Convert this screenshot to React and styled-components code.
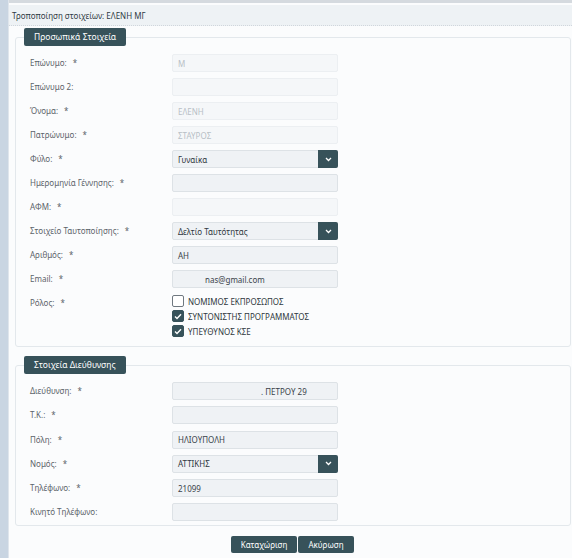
import React from "react";
import styled, { createGlobalStyle } from "styled-components";

const Global = createGlobalStyle`
  html, body { margin: 0; padding: 0; background: #fbfcfd; }
  body { font-family: "Noto Sans", "Open Sans", sans-serif; color: #555c63; }
  * { box-sizing: border-box; }
`;

const Page = styled.div`
  display: flex;
  width: 572px;
  height: 558px;
  overflow: hidden;
  background: #fbfcfd;
`;

const Stripe = styled.div`
  width: 9px;
  flex: none;
  background: #c9d5e2;
  border-right: 1px solid #dfe5ec;
`;

const Main = styled.div`
  flex: 1;
  display: flex;
  flex-direction: column;
  border-top: 3px solid #d5dadf;
`;

const Header = styled.div`
  margin-top: 2px;
  height: 21px;
  background: #eef2f5;
  border-bottom: 1px dotted #d0d6dc;
  display: flex;
  align-items: center;
  padding-left: 3px;
  font-size: 8px;
  color: #2f3a44;
`;

const Fieldset = styled.fieldset`
  margin: ${(p) => p.$top}px 1px 0 6px;
  padding: 0 0 ${(p) => p.$bottom}px 14px;
  border: 1px solid #e3e8ec;
  border-radius: 3px;
  background: #fbfcfd;
  min-width: 0;
`;

const Legend = styled.legend`
  margin-left: -6px;
  padding: 0 10px;
  height: 18px;
  line-height: 18px;
  background: #37525a;
  color: #ffffff;
  font-size: 8.5px;
  border-radius: 2px;
`;

const Rows = styled.div`
  display: flex;
  flex-direction: column;
  gap: ${(p) => p.$gap}px;
  padding-top: ${(p) => p.$pt}px;
`;

const Row = styled.div`
  display: grid;
  grid-template-columns: 142px 166px;
  align-items: start;
`;

const Label = styled.div`
  font-size: 8px;
  color: #5b636a;
  padding-top: 3px;
  white-space: nowrap;
  b {
    font-weight: normal;
    margin-left: 6px;
  }
`;

const Input = styled.div`
  height: ${(p) => p.$h || 18}px;
  border: 1px solid ${(p) => (p.$disabled ? "#eceff2" : "#dde2e6")};
  background: ${(p) => (p.$disabled ? "#f5f7f9" : "#eff2f5")};
  border-radius: 2px;
  font-size: 8px;
  color: ${(p) => (p.$disabled ? "#b8bfc6" : "#39424a")};
  display: flex;
  align-items: center;
  padding-left: ${(p) => p.$pl || 5}px;
  white-space: nowrap;
`;

const Select = styled.div`
  height: 18px;
  border: 1px solid #dde2e6;
  background: #eff2f5;
  border-radius: 2px;
  font-size: 8px;
  color: #2f3840;
  display: flex;
  align-items: center;
  justify-content: space-between;
  padding-left: 5px;
`;

const Arrow = styled.div`
  width: 20px;
  height: 18px;
  margin: -1px -1px -1px 0;
  background: #37525a;
  border-radius: 0 2px 2px 0;
  display: flex;
  align-items: center;
  justify-content: center;
`;

const Checks = styled.div`
  display: flex;
  flex-direction: column;
  gap: 3px;
  padding-top: 1px;
`;

const Check = styled.div`
  display: flex;
  align-items: center;
  gap: 4px;
  font-size: 8px;
  color: #2f3840;
  height: 12px;
  white-space: nowrap;
`;

const Box = styled.div`
  width: 12px;
  height: 12px;
  flex: none;
  border-radius: 2px;
  border: 1px solid ${(p) => (p.$on ? "#37525a" : "#6f7880")};
  background: ${(p) => (p.$on ? "#37525a" : "#ffffff")};
  display: flex;
  align-items: center;
  justify-content: center;
`;

const Buttons = styled.div`
  display: flex;
  justify-content: center;
  gap: 1px;
  margin-top: 10px;
  padding-left: 4px;
`;

const Button = styled.button`
  height: 17px;
  width: ${(p) => p.$w}px;
  border: none;
  border-radius: 2px;
  background: #37525a;
  color: #ffffff;
  font-family: inherit;
  font-size: 8px;
  padding: 0;
`;

const Chevron = () => (
  <svg width="7" height="5" viewBox="0 0 7 5">
    <path d="M1 1 L3.5 3.5 L6 1" stroke="#fff" strokeWidth="1.3" fill="none" />
  </svg>
);

const Tick = () => (
  <svg width="8" height="7" viewBox="0 0 8 7">
    <path d="M1 3.5 L3 5.5 L7 1.2" stroke="#fff" strokeWidth="1.4" fill="none" />
  </svg>
);

const Field = ({ label, req, children }) => (
  <Row>
    <Label>
      {label}
      {req && <b>*</b>}
    </Label>
    {children}
  </Row>
);

const Sel = ({ value }) => (
  <Select>
    {value}
    <Arrow>
      <Chevron />
    </Arrow>
  </Select>
);

export default function App() {
  return (
    <Page>
      <Global />
      <Stripe />
      <Main>
        <Header>Τροποποίηση στοιχείων: ΕΛΕΝΗ ΜΓ</Header>
        <Fieldset $top={2} $bottom={9}>
          <Legend>Προσωπικά Στοιχεία</Legend>
          <Rows $gap={6} $pt={8}>
            <Field label="Επώνυμο:" req>
              <Input $disabled>Μ</Input>
            </Field>
            <Field label="Επώνυμο 2:">
              <Input $disabled />
            </Field>
            <Field label="Όνομα:" req>
              <Input $disabled>ΕΛΕΝΗ</Input>
            </Field>
            <Field label="Πατρώνυμο:" req>
              <Input $disabled>ΣΤΑΥΡΟΣ</Input>
            </Field>
            <Field label="Φύλο:" req>
              <Sel value="Γυναίκα" />
            </Field>
            <Field label="Ημερομηνία Γέννησης:" req>
              <Input />
            </Field>
            <Field label="ΑΦΜ:" req>
              <Input $disabled />
            </Field>
            <Field label="Στοιχείο Ταυτοποίησης:" req>
              <Sel value="Δελτίο Ταυτότητας" />
            </Field>
            <Field label="Αριθμός:" req>
              <Input>ΑΗ</Input>
            </Field>
            <Field label="Email:" req>
              <Input $pl={32}>nas@gmail.com</Input>
            </Field>
            <Field label="Ρόλος:" req>
              <Checks>
                <Check>
                  <Box />
                  ΝΟΜΙΜΟΣ ΕΚΠΡΟΣΩΠΟΣ
                </Check>
                <Check>
                  <Box $on>
                    <Tick />
                  </Box>
                  ΣΥΝΤΟΝΙΣΤΗΣ ΠΡΟΓΡΑΜΜΑΤΟΣ
                </Check>
                <Check>
                  <Box $on>
                    <Tick />
                  </Box>
                  ΥΠΕΥΘΥΝΟΣ ΚΣΕ
                </Check>
              </Checks>
            </Field>
          </Rows>
        </Fieldset>
        <Fieldset $top={9} $bottom={4}>
          <Legend>Στοιχεία Διεύθυνσης</Legend>
          <Rows $gap={6.3} $pt={8}>
            <Field label="Διεύθυνση:" req>
              <Input $pl={88}>. ΠΕΤΡΟΥ 29</Input>
            </Field>
            <Field label="Τ.Κ.:" req>
              <Input />
            </Field>
            <Field label="Πόλη:" req>
              <Input>ΗΛΙΟΥΠΟΛΗ</Input>
            </Field>
            <Field label="Νομός:" req>
              <Sel value="ΑΤΤΙΚΗΣ" />
            </Field>
            <Field label="Τηλέφωνο:" req>
              <Input>21099</Input>
            </Field>
            <Field label="Κινητό Τηλέφωνο:">
              <Input />
            </Field>
          </Rows>
        </Fieldset>
        <Buttons>
          <Button $w={66}>Καταχώριση</Button>
          <Button $w={56}>Ακύρωση</Button>
        </Buttons>
      </Main>
    </Page>
  );
}
